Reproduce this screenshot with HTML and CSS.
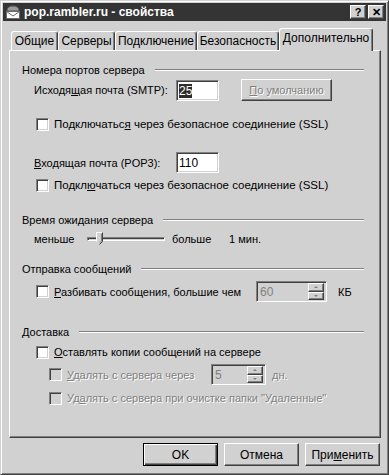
FILE: index.html
```html
<!DOCTYPE html>
<html lang="ru">
<head>
    <meta charset="UTF-8">
    <title>pop.rambler.ru - свойства</title>
    <link rel="stylesheet" href="styles.css">
</head>
<body>
    <div class="window">
        <div class="titlebar">
            <svg class="app-icon" width="16" height="16" viewBox="0 0 16 16">
                <path d="M2 7 Q2 2 8 2 Q14 2 14 7 Z" fill="#9a9a9a" stroke="#5a5a5a"/>
                <rect x="1.5" y="7.5" width="13" height="7" fill="#fff" stroke="#6a6a6a"/>
                <path d="M1.5 7.5 L8 12 L14.5 7.5" fill="none" stroke="#6a6a6a"/>
            </svg>
            <span class="title">pop.rambler.ru - свойства</span>
            <div class="caption-btns">
                <span class="cap-btn">?</span>
                <span class="cap-btn">✕</span>
            </div>
        </div>

        <div class="tabs">
            <div class="tab tab-general">Общие</div>
            <div class="tab tab-servers">Серверы</div>
            <div class="tab tab-connect">Подключение</div>
            <div class="tab tab-security">Безопасность</div>
            <div class="tab tab-advanced active">Дополнительно</div>
        </div>

        <div class="panel">
            <div class="group-head">Номера портов сервера</div>
            <div class="row row-smtp">
                <label class="port-label">Исходя<u>щ</u>ая почта (SMTP):</label>
                <div class="edit"><span class="selected">25</span></div>
                <button class="btn btn-default-port" disabled><u>П</u>о умолчанию</button>
            </div>
            <div class="row row-check row-ssl1">
                <span class="checkbox"></span>
                <span class="ssl">Подключатьс<u>я</u> через безопасное соединение (SSL)</span>
            </div>
            <div class="row row-pop3">
                <label class="port-label"><u>В</u>ходящая почта (POP3):</label>
                <div class="edit">110</div>
            </div>
            <div class="row row-check row-ssl2">
                <span class="checkbox"></span>
                <span class="ssl">Подкл<u>ю</u>чаться через безопасное соединение (SSL)</span>
            </div>

            <div class="group-head head-timeout">Время ожидания сервера</div>
            <div class="row row-slider">
                <span class="slider-min">меньше</span>
                <div class="slider">
                    <div class="track"></div>
                    <svg class="thumb" width="7" height="13" viewBox="0 0 7 13">
                        <path d="M0.5 0.5 H6.5 V9.5 L3.5 12.5 L0.5 9.5 Z" fill="#d1d1d1"/>
                        <path d="M0.5 9.5 V0.5 H6.5" fill="none" stroke="#fff"/>
                        <path d="M6.5 0.5 V9.5 L3.5 12.5" fill="none" stroke="#404040"/>
                        <path d="M5.5 1.5 V9 L3.5 11" fill="none" stroke="#808080"/>
                    </svg>
                </div>
                <span class="slider-max">больше</span>
                <span>1 мин.</span>
            </div>

            <div class="group-head head-send">Отправка сообщений</div>
            <div class="row row-check row-split">
                <span class="checkbox"></span>
                <span class="split-label"><u>Р</u>азбивать сообщения, большие чем</span>
                <div class="spin spin-kb">
                    <span class="spin-value">60</span>
                    <div class="spin-btns">
                        <span class="spin-btn"><span class="arrow-up"></span></span>
                        <span class="spin-btn"><span class="arrow-down"></span></span>
                    </div>
                </div>
                <span class="unit">КБ</span>
            </div>

            <div class="group-head head-delivery">Доставка</div>
            <div class="row row-check row-keep">
                <span class="checkbox"></span>
                <span><u>О</u>ставлять копии сообщений на сервере</span>
            </div>
            <div class="row row-check row-sub row-after">
                <span class="checkbox disabled"></span>
                <span class="off after-label"><u>У</u>далять с сервера через</span>
                <div class="spin spin-days">
                    <span class="spin-value">5</span>
                    <div class="spin-btns">
                        <span class="spin-btn"><span class="arrow-up"></span></span>
                        <span class="spin-btn"><span class="arrow-down"></span></span>
                    </div>
                </div>
                <span class="off unit">дн.</span>
            </div>
            <div class="row row-check row-sub row-purge">
                <span class="checkbox disabled"></span>
                <span class="off">Уд<u>а</u>лять с сервера при очистке папки "Удаленные"</span>
            </div>
        </div>

        <div class="dialog-buttons">
            <button class="btn btn-ok">OK</button>
            <button class="btn">Отмена</button>
            <button class="btn">При<u>м</u>енить</button>
        </div>
    </div>
</body>
</html>
```

FILE: styles.css
```css
body {
    margin: 0;
    background: #d1d1d1;
    font-family: "Liberation Sans", Arial, sans-serif;
    font-size: 11px;
    color: #000;
}
u {
    text-decoration: underline;
    text-underline-offset: 1px;
}
.window {
    width: 389px;
    height: 475px;
    box-sizing: border-box;
    background: #d1d1d1;
    border: 1px solid;
    border-color: #d1d1d1 #404040 #404040 #d1d1d1;
    box-shadow: inset 1px 1px #fff, inset -1px -1px #808080;
    padding: 2px;
    white-space: nowrap;
}

/* title bar */
.titlebar {
    height: 18px;
    background: #343434;
    display: flex;
    align-items: center;
    padding: 0 2px 0 2px;
}
.app-icon {
    margin-right: 3px;
}
.title {
    color: #fff;
    font-weight: bold;
    font-size: 12px;
    flex: 1;
}
.caption-btns {
    display: flex;
    gap: 2px;
}
.cap-btn {
    width: 16px;
    height: 14px;
    box-sizing: border-box;
    background: #d1d1d1;
    border: 1px solid;
    border-color: #fff #404040 #404040 #fff;
    box-shadow: inset -1px -1px #808080;
    font-weight: bold;
    font-size: 11px;
    line-height: 12px;
    text-align: center;
}

/* tabs */
.tabs {
    display: flex;
    align-items: flex-end;
    height: 22px;
    margin: 7px 0 0 8px;
}
.tab {
    height: 19px;
    box-sizing: border-box;
    border: 1px solid;
    border-bottom: none;
    border-color: #fff #404040 #fff #fff;
    border-radius: 3px 3px 0 0;
    box-shadow: inset -1px 0 #808080;
    text-align: center;
    line-height: 18px;
    font-size: 12px;
}
.tab-general { width: 47px; }
.tab-servers { width: 57px; }
.tab-connect { width: 82px; }
.tab-security { width: 82px; }
.tab-advanced { width: 94px; }
.tab.active {
    height: 23px;
    margin-bottom: -1px;
    line-height: 19px;
    background: #d1d1d1;
    position: relative;
    z-index: 1;
}

/* property page */
.panel {
    width: 372px;
    height: 388px;
    box-sizing: border-box;
    margin-left: 6px;
    border: 1px solid;
    border-color: #fff #404040 #404040 #fff;
    box-shadow: inset -1px -1px #808080;
    padding: 12px 16px 0 12px;
}
.group-head {
    display: flex;
    align-items: center;
    height: 14px;
}
.group-head::after {
    content: "";
    flex: 1;
    height: 0;
    border-top: 1px solid #808080;
    border-bottom: 1px solid #fff;
    margin-left: 10px;
}
.row {
    display: flex;
    align-items: center;
}
.row-smtp { height: 22px; margin: 2px 0 0 12px; }
.row-ssl1 { margin-top: 16px; }
.row-pop3 { height: 21px; margin: 21px 0 0 12px; }
.row-ssl2 { margin-top: 5px; }
.head-timeout { margin-top: 21px; }
.row-slider { height: 18px; margin: 3px 0 0 12px; }
.head-send { margin-top: 14px; }
.row-split { height: 21px; margin-top: 5px; }
.head-delivery { margin-top: 23px; }
.row-keep { margin-top: 6px; }
.row-after { height: 21px; margin-top: 5px; }
.row-purge { margin-top: 6px; }

.row-check {
    min-height: 14px;
    padding-left: 14px;
}
.row-sub {
    padding-left: 27px;
}
.ssl {
    font-size: 11.5px;
}
.port-label {
    width: 142px;
    flex: none;
}
.edit {
    width: 43px;
    height: 21px;
    box-sizing: border-box;
    background: #fff;
    border: 1px solid;
    border-color: #808080 #fff #fff #808080;
    box-shadow: inset 1px 1px #404040, inset -1px -1px #d1d1d1;
    padding: 3px 0 0 2px;
    line-height: 14px;
    font-size: 12px;
}
.selected {
    background: #2c2c2c;
    color: #fff;
}

.checkbox {
    width: 13px;
    height: 13px;
    box-sizing: border-box;
    background: #fff;
    border: 1px solid;
    border-color: #808080 #fff #fff #808080;
    box-shadow: inset 1px 1px #404040, inset -1px -1px #d1d1d1;
    margin-right: 5px;
    flex: none;
}
.checkbox.disabled {
    background: #d1d1d1;
}
.off {
    color: #808080;
    text-shadow: 1px 1px #fff;
}

/* buttons */
.btn {
    height: 23px;
    box-sizing: border-box;
    background: #d1d1d1;
    border: 1px solid;
    border-color: #fff #404040 #404040 #fff;
    box-shadow: inset -1px -1px #808080;
    font-family: inherit;
    font-size: 12px;
    color: #000;
    padding: 0;
}
.btn-default-port {
    width: 91px;
    height: 22px;
    margin-left: 22px;
    font-size: 11px;
}
.btn:disabled {
    color: #808080;
    text-shadow: 1px 1px #fff;
}
.dialog-buttons {
    display: flex;
    justify-content: flex-end;
    gap: 6px;
    margin: 5px 6px 0 0;
}
.dialog-buttons .btn {
    width: 75px;
}
.btn-ok {
    border-color: #000;
    box-shadow: inset 1px 1px #fff, inset -1px -1px #404040, inset -2px -2px #808080;
}

/* slider */
.slider-min {
    width: 53px;
}
.slider {
    width: 78px;
    height: 18px;
    display: flex;
    align-items: center;
    position: relative;
}
.track {
    width: 100%;
    height: 4px;
    box-sizing: border-box;
    border: 1px solid;
    border-color: #808080 #fff #fff #808080;
    box-shadow: inset 1px 1px #404040;
}
.thumb {
    position: absolute;
    left: 9px;
    top: 2px;
}
.slider-max {
    width: 57px;
    margin-left: 7px;
}

/* spin boxes */
.split-label {
    width: 202px;
    flex: none;
}
.after-label {
    width: 144px;
    flex: none;
}
.spin {
    height: 21px;
    box-sizing: border-box;
    border: 1px solid;
    border-color: #808080 #fff #fff #808080;
    box-shadow: inset 1px 1px #404040, inset -1px -1px #d1d1d1;
    display: flex;
    align-items: center;
    padding: 2px 2px 2px 3px;
    color: #808080;
    font-size: 12px;
}
.spin-kb { width: 71px; }
.spin-days { width: 55px; }
.spin-value {
    flex: 1;
}
.spin-btns {
    width: 16px;
    height: 17px;
    display: flex;
    flex-direction: column;
}
.spin-btn {
    flex: 1;
    box-sizing: border-box;
    border: 1px solid;
    border-color: #fff #404040 #404040 #fff;
    box-shadow: inset -1px -1px #808080;
    display: flex;
    align-items: center;
    justify-content: center;
}
.arrow-up {
    border: 2px solid transparent;
    border-top: none;
    border-bottom: 2px solid #808080;
}
.arrow-down {
    border: 2px solid transparent;
    border-bottom: none;
    border-top: 2px solid #808080;
}
.unit {
    margin-left: 11px;
}
.spin-days + .unit {
    margin-left: 6px;
}
```
